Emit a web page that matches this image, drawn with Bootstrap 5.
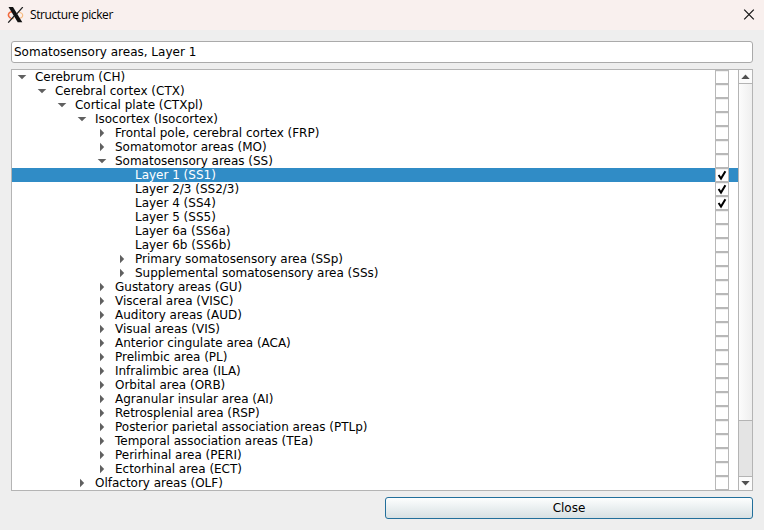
<!DOCTYPE html>
<html lang="en">
<head>
<meta charset="utf-8">
<meta name="viewport" content="width=device-width, initial-scale=1">
<title>Structure picker</title>
<link href="https://cdn.jsdelivr.net/npm/bootstrap@5.3.0/dist/css/bootstrap.min.css" rel="stylesheet">
<style>
body{background:#eee;color:#000;font:12px/14px "DejaVu Sans",sans-serif}
.titlebar{height:30px;background:#f9f0ee;padding:0 9px 0 7px}
.caption-text{font:12px/30px "Open Sans","Noto Sans",sans-serif;margin-left:6px;letter-spacing:-.4px}
.main-area{padding:11px}
.search.form-control{height:22px;min-height:0;padding:0 2px 1px;border:1px solid #aaa;border-radius:3px;font-size:12px;line-height:19px;color:#000;background:#fff}
.tree{height:422px;margin-top:6px;border:1px solid #b4b4b4;background:#fff}
.tree-row{height:14px;padding-right:9px;white-space:nowrap;letter-spacing:-.012px}
.tree-row.selected{background:#308cc6;color:#fff}
.twisty{width:20px;height:14px;flex:none}
.twisty path{fill:#606060}
.check{width:14px;height:14px;border:1px solid #b8b8b8;background:#fff;box-shadow:inset 0 1px #f0f0f0}
.scroll{width:14px;border-left:1px solid #b4b4b4;background:#e4e4e4}
.scroll button{height:14px;border:0;background:#fbfbfb;padding:0}
.scroll .up{border-bottom:1px solid #b4b4b4}
.scroll .down{border-top:1px solid #b4b4b4}
.thumb{height:337px;background:linear-gradient(90deg,#fcfcfc,#efefef);border-bottom:1px solid #b4b4b4}
.close-btn.btn{width:368px;height:22px;margin-top:6px;padding:0;border:1px solid #226f9b;border-radius:3px;background:linear-gradient(#fdfefe,#d7e0e3);font-size:12px;line-height:20px;color:#000}
</style>
</head>
<body class="vh-100 overflow-hidden">
<header class="titlebar d-flex align-items-center">
  <svg width="17" height="16" viewBox="0 0 17 16" aria-hidden="true">
    <path d="M5 4.7C1 5 0 9 3.8 11.4" fill="none" stroke="#f26a3d" stroke-width="1.5"/>
    <path d="M11 5C17.5 6 17 11 11 11.6M4 11.6H7" fill="none" stroke="#f8bd83" stroke-width="1.2"/>
    <path d="M1.5 0H6L15.3 15.3H10.7Z" fill="#111"/>
    <path d="M15.8 0L9.3 7.3M7.2 9L1.2 15.7" stroke="#222" stroke-width="1.2"/>
  </svg>
  <span class="caption-text">Structure picker</span>
  <svg class="ms-auto" width="12" height="12" viewBox="0 0 12 12" aria-label="Close window"><path d="M1.2 .7L10.8 10.3M10.8 .7L1.2 10.3" stroke="#111" stroke-width="1.2"/></svg>
</header>
<main class="main-area d-flex flex-column">
  <input class="form-control search" aria-label="Search" value="Somatosensory areas, Layer 1">
  <div class="tree d-flex">
    <div id="rows" class="flex-grow-1 overflow-hidden"></div>
    <div class="scroll d-flex flex-column">
      <button class="up d-flex" aria-label="Up"><svg width="13" height="13"><path d="M2.3 9L6.5 4.6L10.7 9Z" fill="#505050"/></svg></button>
      <div class="thumb"></div>
      <button class="down mt-auto d-flex" aria-label="Down"><svg width="13" height="13"><path d="M2.3 4L6.5 8.4L10.7 4Z" fill="#505050"/></svg></button>
    </div>
  </div>
  <button class="btn close-btn align-self-end">Close</button>
</main>
<script>
// depth, state (o = open, c = collapsed, - = leaf), label, checked
const nodes = [
  [0,'o','Cerebrum (CH)'],[1,'o','Cerebral cortex (CTX)'],[2,'o','Cortical plate (CTXpl)'],
  [3,'o','Isocortex (Isocortex)'],[4,'c','Frontal pole, cerebral cortex (FRP)'],
  [4,'c','Somatomotor areas (MO)'],[4,'o','Somatosensory areas (SS)'],
  [5,'-','Layer 1 (SS1)',1],[5,'-','Layer 2/3 (SS2/3)',1],[5,'-','Layer 4 (SS4)',1],
  [5,'-','Layer 5 (SS5)'],[5,'-','Layer 6a (SS6a)'],[5,'-','Layer 6b (SS6b)'],
  [5,'c','Primary somatosensory area (SSp)'],[5,'c','Supplemental somatosensory area (SSs)'],
  [4,'c','Gustatory areas (GU)'],[4,'c','Visceral area (VISC)'],[4,'c','Auditory areas (AUD)'],
  [4,'c','Visual areas (VIS)'],[4,'c','Anterior cingulate area (ACA)'],[4,'c','Prelimbic area (PL)'],
  [4,'c','Infralimbic area (ILA)'],[4,'c','Orbital area (ORB)'],[4,'c','Agranular insular area (AI)'],
  [4,'c','Retrosplenial area (RSP)'],[4,'c','Posterior parietal association areas (PTLp)'],
  [4,'c','Temporal association areas (TEa)'],[4,'c','Perirhinal area (PERI)'],
  [4,'c','Ectorhinal area (ECT)'],[3,'c','Olfactory areas (OLF)']
];
const arrows = {o:'<path d="M5.7 5H14.3L10 9.2Z"/>', c:'<path d="M8 2.7V11.3L12.2 7Z"/>', '-':''};
document.getElementById('rows').innerHTML = nodes.map(([d,s,label,on]) =>
  `<div class="tree-row d-flex${label === 'Layer 1 (SS1)' ? ' selected' : ''}">
    <svg class="twisty" style="margin-left:${d*20}px">${arrows[s]}</svg><span class="ps-1" style="margin-left:-1px">${label}</span>
    <span class="check d-flex ms-auto">${on ? '<svg width="12" height="12"><path d="M2.6 6L5 9.6L9.4 2.2" fill="none" stroke="#000" stroke-width="2"/></svg>' : ''}</span>
  </div>`).join('');
</script>
<script src="https://cdn.jsdelivr.net/npm/bootstrap@5.3.0/dist/js/bootstrap.bundle.min.js"></script>
</body>
</html>
